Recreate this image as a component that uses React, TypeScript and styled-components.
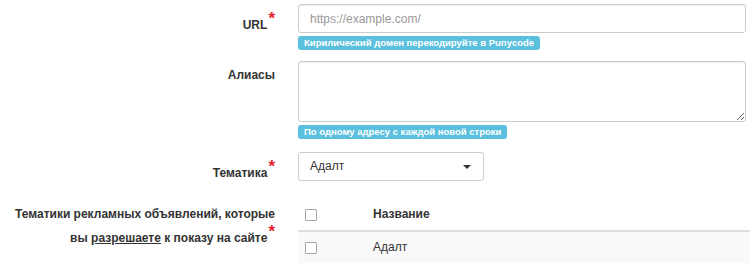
import React from "react";
import styled, { createGlobalStyle } from "styled-components";

const Global = createGlobalStyle`
  html, body { margin: 0; padding: 0; background: #fff; }
  body {
    font-family: "Liberation Sans", Arial, Helvetica, sans-serif;
    font-size: 12px;
    line-height: 17px;
    color: #333;
  }
  * { box-sizing: border-box; }
`;

const Form = styled.form`
  display: flex;
  flex-direction: column;
  padding-top: 4px;
  width: 750px;
  overflow: hidden;
`;

const Row = styled.div<{ $gap: number }>`
  display: grid;
  grid-template-columns: 275px 1fr;
  column-gap: 23px;
  margin-bottom: ${(p) => p.$gap}px;
`;

const Label = styled.label`
  display: block;
  text-align: right;
  font-weight: 700;
  padding-top: 6px;
  line-height: 17px;
  white-space: nowrap;
`;

const Req = styled.span`
  color: #e3222b;
  font-size: 17px;
  font-weight: 700;
  line-height: 17px;
  vertical-align: super;
  margin-left: 1px;
`;

const Field = styled.div`
  display: flex;
  flex-direction: column;
  align-items: flex-start;
  min-width: 0;
`;

const Input = styled.input`
  width: 448px;
  height: 29px;
  padding: 5px 11px;
  font: inherit;
  color: #555;
  background: #fff;
  border: 1px solid #ccc;
  border-radius: 3px;
  box-shadow: inset 0 1px 1px rgba(0, 0, 0, 0.075);
  outline: none;
  &::placeholder { color: #999; }
`;

const TextArea = styled.textarea`
  width: 448px;
  height: 61px;
  padding: 5px 11px;
  font: inherit;
  color: #555;
  background: #fff;
  border: 1px solid #ccc;
  border-radius: 3px;
  box-shadow: inset 0 1px 1px rgba(0, 0, 0, 0.075);
  outline: none;
  resize: vertical;
  display: block;
`;

const Hint = styled.span`
  display: inline-block;
  margin-top: 3px;
  background: #5bc0de;
  color: #fff;
  font-size: 9.5px;
  font-weight: 700;
  line-height: 9px;
  padding: 2px 6px 3px;
  border-radius: 3px;
  white-space: nowrap;
`;

const SelectButton = styled.button`
  width: 186px;
  height: 29px;
  display: flex;
  align-items: center;
  justify-content: space-between;
  padding: 0 12px 0 11px;
  font: inherit;
  color: #333;
  background: #fff;
  border: 1px solid #ccc;
  border-radius: 3px;
  text-align: left;
  cursor: pointer;
`;

const Caret = styled.span`
  width: 0;
  height: 0;
  border-left: 4px solid transparent;
  border-right: 4px solid transparent;
  border-top: 4px solid #333;
  margin-top: 1px;
`;

const Table = styled.table`
  width: 100%;
  border-collapse: collapse;
  border-spacing: 0;
  margin-top: -1px;
`;

const Th = styled.th<{ $w?: number }>`
  text-align: left;
  font-weight: 700;
  padding: 7px 7px;
  line-height: 17px;
  border-bottom: 2px solid #ddd;
  vertical-align: middle;
  width: ${(p) => (p.$w ? `${p.$w}px` : "auto")};
`;

const Tr = styled.tr<{ $striped?: boolean }>`
  background: ${(p) => (p.$striped ? "#f9f9f9" : "transparent")};
`;

const Td = styled.td`
  padding: 7px 7px;
  line-height: 17px;
  vertical-align: middle;
`;

const Check = styled.span`
  display: block;
  width: 12px;
  height: 12px;
  border: 1px solid #a8a8a8;
  border-radius: 1px;
  background: #fff;
`;

export default function App() {
  return (
    <>
      <Global />
      <Form>
        <Row $gap={11}>
          <Label>
            URL<Req>*</Req>
          </Label>
          <Field>
            <Input placeholder="https://example.com/" />
            <Hint>Кирилический домен перекодируйте в Punycode</Hint>
          </Field>
        </Row>
        <Row $gap={13}>
          <Label>Алиасы</Label>
          <Field>
            <TextArea />
            <Hint>По одному адресу с каждой новой строки</Hint>
          </Field>
        </Row>
        <Row $gap={18}>
          <Label>
            Тематика<Req>*</Req>
          </Label>
          <Field>
            <SelectButton type="button">
              <span>Адалт</span>
              <Caret />
            </SelectButton>
          </Field>
        </Row>
        <Row $gap={0}>
          <Label>
            Тематики рекламных объявлений, которые
            <br />
            вы <u>разрешаете</u> к показу на сайте<Req>*</Req>
          </Label>
          <Field>
            <Table>
              <thead>
                <tr>
                  <Th $w={68}>
                    <Check />
                  </Th>
                  <Th>Название</Th>
                </tr>
              </thead>
              <tbody>
                <Tr $striped>
                  <Td>
                    <Check />
                  </Td>
                  <Td>Адалт</Td>
                </Tr>
              </tbody>
            </Table>
          </Field>
        </Row>
      </Form>
    </>
  );
}
